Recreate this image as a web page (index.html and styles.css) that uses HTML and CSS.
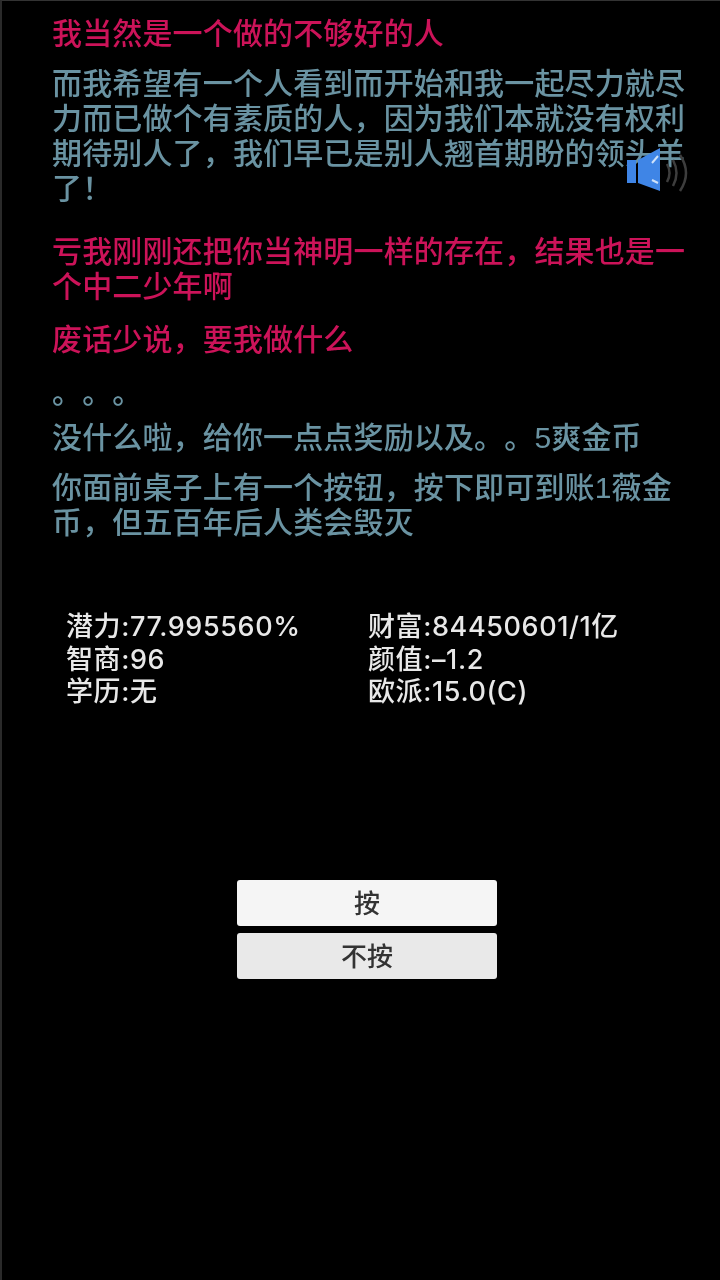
FILE: index.html
```html
<!DOCTYPE html>
<html lang="zh-CN">

<head>
    <meta charset="UTF-8">
    <meta name="viewport" content="width=device-width, initial-scale=1.0">
    <title>按钮</title>
    <link rel="stylesheet" href="styles.css">
</head>

<body>
    <div class="screen">
        <div class="story">
            <p class="line pink">我当然是一个做的不够好的人</p>
            <p class="line teal">而我希望有一个人看到而开始和我一起尽力就尽力而已做个有素质的人，因为我们本就没有权利期待别人了，我们早已是别人翘首期盼的领头羊了！</p>
            <p class="line pink gap-big">亏我刚刚还把你当神明一样的存在，结果也是一个中二少年啊</p>
            <p class="line pink gap-mid">废话少说，要我做什么</p>
            <p class="line teal gap-mid">。。。</p>
            <p class="line teal gap-small">没什么啦，给你一点点奖励以及。。5爽金币</p>
            <p class="line teal">你面前桌子上有一个按钮，按下即可到账1薇金币，但五百年后人类会毁灭</p>
        </div>

        <div class="stats">
            <span>潜力:77.995560%</span>
            <span>财富:84450601/1亿</span>
            <span>智商:96</span>
            <span>颜值:–1.2</span>
            <span>学历:无</span>
            <span>欧派:15.0(C)</span>
        </div>

        <div class="choices">
            <button type="button" class="choice">按</button>
            <button type="button" class="choice pressed">不按</button>
        </div>

        <!-- floating sound toggle -->
        <svg class="sound" width="68" height="50" viewBox="0 0 68 50">
            <path d="M3 15H12V38H3Z" fill="#3f85e6" />
            <path d="M14 15L36 3V46L14 38Z" fill="#3f85e6" />
            <path d="M28 18L34 11M28 35L34 38" stroke="#cfe2fa" stroke-width="2" fill="none" />
            <path d="M43 19Q48 28 43 37M49 15Q56 28 49 41M56 10Q68 28 56 46" stroke="#3d3d3d" stroke-width="2.5" fill="none" />
        </svg>
    </div>
</body>

</html>
```

FILE: styles.css
```css
html,
body {
    margin: 0;
    background-color: #000;
}

.screen {
    position: relative;
    box-sizing: border-box;
    width: 720px;
    height: 1280px;
    padding-top: 15px;
    border-left: 2px solid #2a2a2a;
    border-top: 1px solid #333;
    overflow: hidden;
    font-family: "Liberation Sans", "Noto Sans CJK SC", sans-serif;
}

.story {
    width: 640px;
    margin-left: 50px;
    filter: blur(0.7px);
}

.line {
    margin: 0 0 15px;
    font-size: 30px;
    font-weight: 500;
    line-height: 35px;
    letter-spacing: 0.15px;
    text-spacing-trim: space-all;
}

.pink {
    color: #cc1359;
}

.teal {
    color: #6a93a2;
}

.gap-big {
    margin-top: 28px;
}

.gap-mid {
    margin-top: 18px;
}

.gap-small {
    margin-top: -5px;
}

.stats {
    display: grid;
    grid-template-columns: 302px 1fr;
    margin: 71px 0 0 64px;
    font-family: Inter, "Noto Sans CJK SC", sans-serif;
    font-size: 27px;
    font-weight: 500;
    line-height: 32.5px;
    letter-spacing: 0.6px;
    color: #e8e8e8;
    filter: blur(0.6px);
}

.choices {
    display: flex;
    flex-direction: column;
    gap: 7px;
    width: 260px;
    margin: 171px 0 0 235px;
}

.choice {
    height: 46px;
    padding: 0 0 2px;
    border: none;
    border-radius: 3px;
    background-color: #f5f5f5;
    color: #333;
    font-family: inherit;
    font-size: 26px;
    font-weight: 500;
    filter: blur(0.7px);
}

.pressed {
    background-color: #e9e9e9;
}

.sound {
    position: absolute;
    top: 144px;
    left: 622px;
    filter: blur(0.5px);
}
```
